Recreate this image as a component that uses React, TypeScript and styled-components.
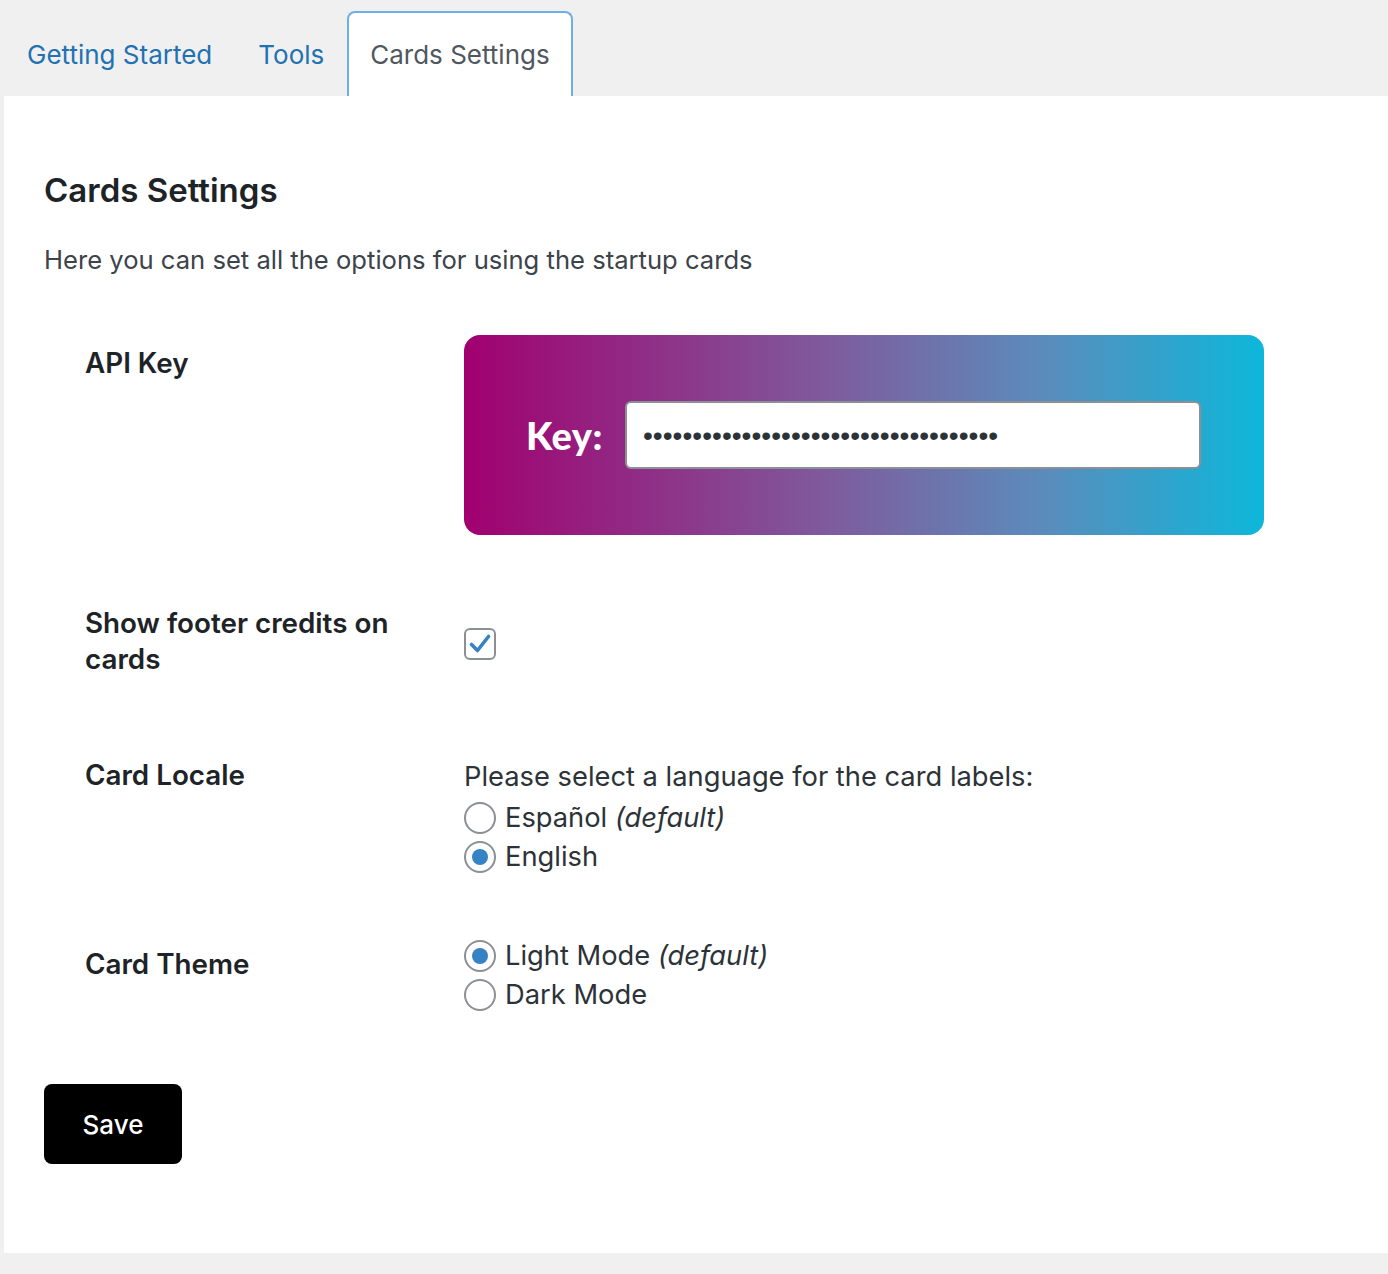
import React, { useState } from 'react'
import styled, { createGlobalStyle } from 'styled-components'

const GlobalStyle = createGlobalStyle`
  html, body {
    margin: 0;
    padding: 0;
    background: #f0f0f1;
    font-family: Inter, "Noto Sans", sans-serif;
    color: #1d2327;
  }
`

const Wrap = styled.div`
  padding: 0 0 22px 4px;
`

const TabBar = styled.nav`
  display: flex;
  align-items: flex-end;
  height: 96px;
`

const Tab = styled.a<{ active?: boolean }>`
  display: block;
  box-sizing: border-box;
  height: ${p => (p.active ? '85px' : 'auto')};
  padding: ${p => (p.active ? '24px 21px 0' : '0 21px 23px')};
  border: 2px solid ${p => (p.active ? '#72aee6' : 'transparent')};
  border-bottom: none;
  border-radius: 8px 8px 0 0;
  background: ${p => (p.active ? '#fff' : 'transparent')};
  color: ${p => (p.active ? '#50575e' : '#2271b1')};
  font-size: 26px;
  line-height: 36px;
  text-decoration: none;
  cursor: pointer;
  white-space: nowrap;
`

const Panel = styled.main`
  background: #fff;
  padding: 74px 40px 89px;
`

const Title = styled.h2`
  margin: 0;
  font-size: 33px;
  line-height: 40px;
  font-weight: 600;
  color: #1d2327;
`

const Intro = styled.p`
  margin: 32px 0 27px;
  font-size: 25.6px;
  line-height: 36px;
  color: #3c434a;
`

const FormTable = styled.div`
  margin-left: 41px;
  display: flex;
  flex-direction: column;
`

const Row = styled.div`
  display: flex;
  align-items: flex-start;
`

const Label = styled.div`
  box-sizing: border-box;
  width: 379px;
  flex: none;
  padding: 40px 39px 40px 0;
  font-size: 27.8px;
  line-height: 36px;
  font-weight: 600;
  color: #1d2327;
`

const Field = styled.div<{ top?: number }>`
  flex: 1;
  padding: ${p => p.top ?? 30}px 0 30px;
  font-size: 27.3px;
  line-height: 39px;
  color: #2c3338;
`

const KeyBox = styled.div`
  display: flex;
  align-items: center;
  gap: 22px;
  width: 800px;
  height: 200px;
  box-sizing: border-box;
  padding: 0 63px 0 62px;
  border-radius: 16px;
  background: linear-gradient(90deg, #a1006f 0%, #7f5a9c 45%, #5c8bbb 72%, #0db7da 100%);
`

const KeyLabel = styled.label`
  font-family: Lato, "Open Sans", sans-serif;
  font-weight: 900;
  font-size: 38px;
  letter-spacing: 0.5px;
  color: #fff;
`

const KeyInput = styled.input`
  flex: 1;
  min-width: 0;
  height: 68px;
  box-sizing: border-box;
  padding: 0 16px;
  border: 2px solid #8c8f94;
  border-radius: 6px;
  background: #fff;
  font-family: "Liberation Sans", Arial, sans-serif;
  font-size: 28.2px;
  color: #2c3338;
  outline: none;
`

const CheckBox = styled.span`
  display: inline-flex;
  align-items: center;
  justify-content: center;
  width: 32px;
  height: 32px;
  box-sizing: border-box;
  margin-top: 33px;
  border: 2px solid #8c8f94;
  border-radius: 6px;
  background: #fff;
  cursor: pointer;
`

const Prompt = styled.div`
  line-height: 36px;
  margin-bottom: 3px;
`

const Option = styled.label`
  display: flex;
  align-items: center;
  gap: 9px;
  cursor: pointer;
`

const RadioDot = styled.span<{ checked: boolean }>`
  position: relative;
  width: 32px;
  height: 32px;
  box-sizing: border-box;
  border: 2px solid #8c8f94;
  border-radius: 50%;
  background: #fff;
  flex: none;

  &::after {
    content: '';
    display: ${p => (p.checked ? 'block' : 'none')};
    position: absolute;
    left: 6px;
    top: 6px;
    width: 16px;
    height: 16px;
    border-radius: 50%;
    background: #3582c4;
  }
`

const Hint = styled.em`
  font-style: italic;
`

const SaveButton = styled.button`
  margin-top: 40px;
  width: 138px;
  height: 80px;
  border: none;
  border-radius: 8px;
  background: #000;
  color: #fff;
  font-family: Inter, sans-serif;
  font-size: 26px;
  font-weight: 500;
  cursor: pointer;
`

function Radio({ checked, onSelect, children }: { checked: boolean; onSelect: () => void; children: React.ReactNode }) {
  return (
    <Option onClick={onSelect}>
      <RadioDot checked={checked} />
      <span>{children}</span>
    </Option>
  )
}

export default function App() {
  const [footer, setFooter] = useState(true)
  const [locale, setLocale] = useState('en')
  const [theme, setTheme] = useState('light')

  return (
    <Wrap>
      <GlobalStyle />
      <TabBar>
        <Tab>Getting Started</Tab>
        <Tab>Tools</Tab>
        <Tab active>Cards Settings</Tab>
      </TabBar>
      <Panel>
        <Title>Cards Settings</Title>
        <Intro>Here you can set all the options for using the startup cards</Intro>
        <FormTable>
          <Row>
            <Label>API Key</Label>
            <Field>
              <KeyBox>
                <KeyLabel>Key:</KeyLabel>
                <KeyInput readOnly value={'•'.repeat(36)} />
              </KeyBox>
            </Field>
          </Row>
          <Row>
            <Label>Show footer credits on cards</Label>
            <Field>
              <CheckBox onClick={() => setFooter(!footer)}>
                {footer && (
                  <svg width="24" height="24" viewBox="0 0 24 24">
                    <path d="M3.5 12.5 L9.5 18.5 L20.5 4.5" fill="none" stroke="#3582c4" strokeWidth="3.6" strokeLinecap="round" strokeLinejoin="round" />
                  </svg>
                )}
              </CheckBox>
            </Field>
          </Row>
          <Row>
            <Label>Card Locale</Label>
            <Field top={42}>
              <Prompt>Please select a language for the card labels:</Prompt>
              <Radio checked={locale === 'es'} onSelect={() => setLocale('es')}>
                Español <Hint>(default)</Hint>
              </Radio>
              <Radio checked={locale === 'en'} onSelect={() => setLocale('en')}>
                English
              </Radio>
            </Field>
          </Row>
          <Row>
            <Label>Card Theme</Label>
            <Field>
              <Radio checked={theme === 'light'} onSelect={() => setTheme('light')}>
                Light Mode <Hint>(default)</Hint>
              </Radio>
              <Radio checked={theme === 'dark'} onSelect={() => setTheme('dark')}>
                Dark Mode
              </Radio>
            </Field>
          </Row>
        </FormTable>
        <SaveButton>Save</SaveButton>
      </Panel>
    </Wrap>
  )
}
